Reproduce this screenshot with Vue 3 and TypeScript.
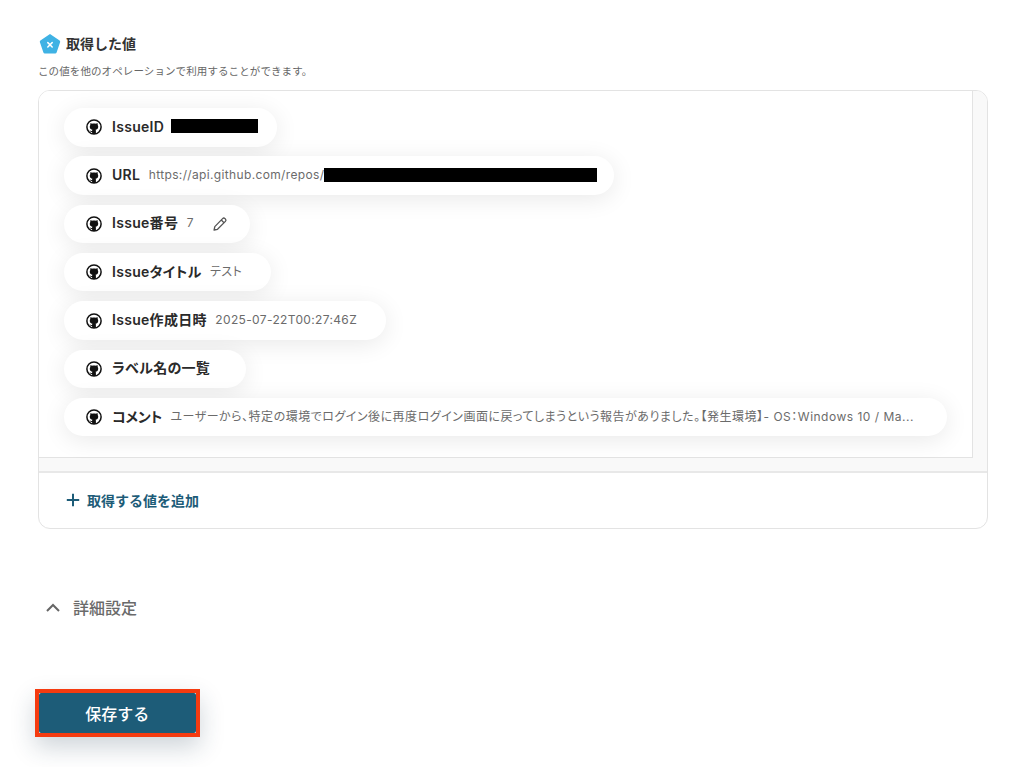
<script setup lang="ts">
interface Row { label: string; value?: string; mask?: number; edit?: boolean }
const rows: Row[] = [
  { label: 'IssueID', mask: 87 },
  { label: 'URL', value: 'https://api.github.com/repos/', mask: 273 },
  { label: 'Issue番号', value: '7', edit: true },
  { label: 'Issueタイトル', value: 'テスト' },
  { label: 'Issue作成日時', value: '2025-07-22T00:27:46Z' },
  { label: 'ラベル名の一覧', value: '' },
  { label: 'コメント', value: 'ユーザーから、特定の環境でログイン後に再度ログイン画面に戻ってしまうという報告がありました。【発生環境】- OS：Windows 10 / Ma...' },
]
</script>

<template>
  <main class="page">
    <header class="title">
      <svg class="logo" viewBox="0 0 22 22" width="22" height="22">
        <path d="M11 1 20.6 7.6 a1.5 1.5 0 0 1 .5 1.7 L17.6 19.4 a1.5 1.5 0 0 1-1.4 1 H5.8 a1.5 1.5 0 0 1-1.4-1 L.9 9.3 a1.5 1.5 0 0 1 .5-1.7 Z" fill="#3fb2e4" />
        <path d="M8.8 9.6 13.2 14 M13.2 9.6 8.8 14" stroke="#fff" stroke-width="1.5" stroke-linecap="round" />
      </svg>
      <h2>取得した値</h2>
    </header>
    <p class="sub">この値を他のオペレーションで利用することができます。</p>

    <section class="card">
      <div class="scroll">
        <div class="inner">
          <ul class="list">
            <li v-for="row in rows" :key="row.label" class="pill">
              <svg class="gh" viewBox="0 0 16 16" width="16" height="16">
                <circle cx="8" cy="8" r="7.1" fill="none" stroke="#111" stroke-width="1.5" />
                <path d="M4.6 3.9 6 4.7 C7.2 4.3 8.8 4.3 10 4.7 L11.4 3.9 C11.7 4.6 11.8 5.3 11.7 5.9 C12.5 7 12.4 9 11.3 10 C10.8 10.5 10.2 10.7 9.6 10.8 L9.9 11.6 V15 H6.1 V12.9 C5 13.1 4.1 12.7 3.5 11.6 L4.3 11.5 C4.8 12.1 5.4 12.2 6.1 12 V11.4 L6.4 10.8 C5.8 10.7 5.2 10.5 4.7 10 C3.6 9 3.5 7 4.3 5.9 C4.2 5.3 4.3 4.6 4.6 3.9 Z" fill="#111" />
              </svg>
              <strong class="label">{{ row.label }}</strong>
              <span v-if="row.value !== undefined" class="value">{{ row.value }}</span>
              <span v-if="row.mask" class="mask" :style="{ width: row.mask + 'px' }"></span>
              <svg v-if="row.edit" class="edit" viewBox="0 0 16 16" width="16" height="16">
                <path d="M10.6 2.6a1.7 1.7 0 0 1 2.4 0l.4.4a1.7 1.7 0 0 1 0 2.4l-7.9 7.9-3.4.7.7-3.4Z M9.3 4 12 6.7" fill="none" stroke="#555" stroke-width="1.3" stroke-linejoin="round" />
              </svg>
            </li>
          </ul>
        </div>
      </div>
      <div class="add">
        <svg viewBox="0 0 14 14" width="14" height="14">
          <path d="M7 .8v12.4M.8 7h12.4" stroke="#1d5c78" stroke-width="2" />
        </svg>
        <span>取得する値を追加</span>
      </div>
    </section>

    <div class="detail">
      <svg viewBox="0 0 14 9" width="14" height="9">
        <path d="M1 8 7 2l6 6" fill="none" stroke="#666" stroke-width="2" />
      </svg>
      <span>詳細設定</span>
    </div>

    <div class="save-wrap">
      <button class="save" type="button">保存する</button>
    </div>
  </main>
</template>

<style scoped>
.page {
  box-sizing: border-box;
  width: 1017px;
  height: 767px;
  overflow: hidden;
  padding: 33px 29px 0 38px;
  background: #fff;
  font-family: Inter, "Noto Sans CJK JP", sans-serif;
  color: #2a2a2a;
}
.title {
  display: flex;
  align-items: center;
  gap: 5px;
  height: 22px;
  margin-left: 1px;
}
.logo { display: block; flex: none; }
h2 {
  margin: 0 0 1px;
  font-size: 14px;
  line-height: 20px;
  font-weight: 600;
  color: #333;
}
.sub {
  margin: 9px 0 0;
  height: 15px;
  line-height: 15px;
  font-size: 10.5px;
  letter-spacing: 0.1px;
  color: #666;
}
.card {
  box-sizing: border-box;
  width: 950px;
  height: 439px;
  margin-top: 11px;
  border: 1px solid #e3e3e3;
  border-radius: 12px;
  overflow: hidden;
}
.scroll {
  box-sizing: border-box;
  height: 382px;
  background: #f9f9f9;
  border-bottom: 2px solid #e8e8e8;
  padding-right: 14px;
  padding-bottom: 13px;
}
.inner {
  box-sizing: border-box;
  height: 367px;
  background: #fff;
  border-right: 1px solid #e3e3e3;
  border-bottom: 1px solid #e3e3e3;
  padding: 17px 0 0 25px;
}
.list {
  list-style: none;
  margin: 0;
  padding: 0;
  display: flex;
  flex-direction: column;
  align-items: flex-start;
  gap: 9.83px;
}
.pill {
  box-sizing: border-box;
  display: flex;
  align-items: center;
  height: 38.5px;
  padding: 0 29px 0 22px;
  border-radius: 20px;
  background: #fff;
  box-shadow: 0 4px 24px rgba(0, 0, 0, 0.09);
  white-space: nowrap;
}
.pill:last-child { padding-right: 33px; }
.pill:last-child .label { letter-spacing: -0.2px; }
.pill:last-child .value { letter-spacing: 0.5px; }
.gh { flex: none; display: block; }
.label {
  margin-left: 10px;
  font-size: 14px;
  letter-spacing: 0.3px;
  font-feature-settings: "palt";
  line-height: 20px;
  margin-top: -1px;
  font-weight: 600;
  color: #2a2a2a;
}
.value {
  margin-left: 8.5px;
  font-size: 12px;
  letter-spacing: 0.35px;
  font-feature-settings: "palt";
  line-height: 18px;
  margin-top: -1px;
  color: #6b6b6b;
}
.value:empty { margin-left: 6.5px; }
.mask {
  display: block;
  height: 14px;
  margin-right: -12px;
  margin-top: -1px;
  background: #000;
}
.label + .mask { margin-left: 7px; margin-bottom: 2px; margin-right: -10px; }
.edit { margin-left: 18px; margin-right: -7px; flex: none; }
.add {
  display: flex;
  align-items: center;
  gap: 7px;
  height: 55px;
  padding: 0 0 2px 27px;
  box-sizing: border-box;
  font-size: 14px;
  font-weight: 600;
  color: #1d5c78;
}
.detail {
  display: flex;
  align-items: center;
  gap: 13px;
  height: 24px;
  margin-top: 66px;
  padding-left: 8px;
  font-size: 16px;
  font-weight: 500;
  color: #6a6a6a;
}
.save-wrap {
  width: 164.5px;
  height: 48px;
  box-sizing: border-box;
  margin: 70px 0 0 -3px;
  border: 4.5px solid #f53b10;
  box-shadow: 0 10px 24px rgba(30, 60, 80, 0.22);
}
.save {
  display: block;
  width: 100%;
  height: 100%;
  border: 0;
  border-radius: 2px;
  background: #1d5c78;
  color: #fff;
  padding: 0;
  font: 500 16px Inter, "Noto Sans CJK JP", sans-serif;
}
</style>
